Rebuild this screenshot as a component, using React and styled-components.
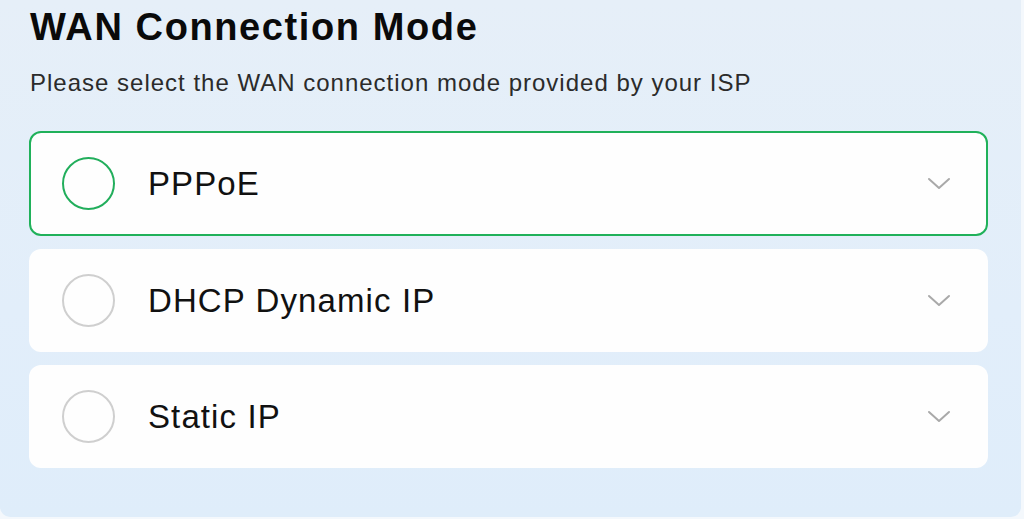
import React, { useState } from 'react';
import styled, { createGlobalStyle } from 'styled-components';

const Global = createGlobalStyle`
  html, body { margin: 0; padding: 0; background: #f4f8fc; }
  body { font-family: "Liberation Sans", Arial, sans-serif; }
`;

const Panel = styled.div`
  width: 1021px;
  height: 517px;
  box-sizing: border-box;
  padding: 4px 33px 0 29px;
  background: linear-gradient(180deg, #e6eff8 0%, #e2eefa 60%, #dfedfa 100%);
  border-radius: 0 0 10px 10px;
  display: flex;
  flex-direction: column;
`;

const Title = styled.h1`
  margin: 0 0 0 1px;
  font-size: 38px;
  font-weight: 700;
  color: #0a0a0a;
  line-height: 46px;
  letter-spacing: 1.6px;
`;

const Subtitle = styled.p`
  margin: 18px 0 0 1px;
  font-size: 24px;
  color: #2b2b2b;
  line-height: 30px;
  letter-spacing: 1px;
`;

const List = styled.div`
  margin-top: 33px;
  display: flex;
  flex-direction: column;
  gap: 13px;
`;

const Card = styled.button`
  all: unset;
  box-sizing: border-box;
  height: ${p => (p.$active ? '105px' : '103px')};
  display: flex;
  align-items: center;
  padding: 0 35px 0 31px;
  background: #fefefe;
  border-radius: 12px;
  border: 2px solid ${p => (p.$active ? '#20b15a' : 'transparent')};
  cursor: pointer;
`;

const Radio = styled.span`
  width: 53px;
  height: 53px;
  box-sizing: border-box;
  border-radius: 50%;
  border: 2px solid ${p => (p.$active ? '#22ae5c' : '#cfcfcf')};
  flex: none;
`;

const Label = styled.span`
  margin-left: 33px;
  font-size: 33px;
  color: #111;
  letter-spacing: 1.1px;
  flex: 1;
`;

const Chevron = () => (
  <svg width="24" height="14" viewBox="0 0 24 14" fill="none">
    <path d="M2 2 L12 11 L22 2" stroke="#a9a9a9" strokeWidth="2" strokeLinecap="round" strokeLinejoin="round" />
  </svg>
);

const modes = ['PPPoE', 'DHCP Dynamic IP', 'Static IP'];

export default function App() {
  const [sel, setSel] = useState(0);
  return (
    <>
      <Global />
      <Panel>
        <Title>WAN Connection Mode</Title>
        <Subtitle>Please select the WAN connection mode provided by your ISP</Subtitle>
        <List>
          {modes.map((m, i) => (
            <Card key={m} $active={sel === i} onClick={() => setSel(i)}>
              <Radio $active={sel === i} />
              <Label>{m}</Label>
              <Chevron />
            </Card>
          ))}
        </List>
      </Panel>
    </>
  );
}
